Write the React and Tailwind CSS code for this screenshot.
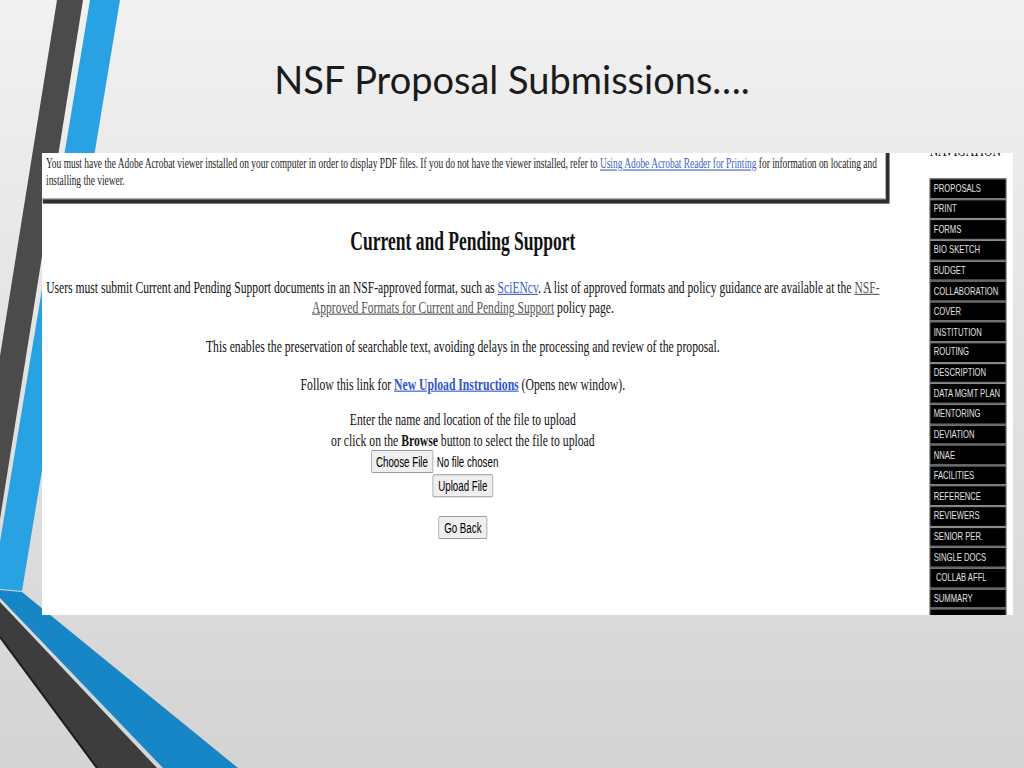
import React from "react";

const navItems = [
  "PROPOSALS",
  "PRINT",
  "FORMS",
  "BIO SKETCH",
  "BUDGET",
  "COLLABORATION",
  "COVER",
  "INSTITUTION",
  "ROUTING",
  "DESCRIPTION",
  "DATA MGMT PLAN",
  "MENTORING",
  "DEVIATION",
  "NNAE",
  "FACILITIES",
  "REFERENCE",
  "REVIEWERS",
  "SENIOR PER.",
  "SINGLE DOCS",
  "COLLAB AFFL",
  "SUMMARY",
  "SUPPORT",
];

const btn =
  "h-[21px] rounded-[2px] border border-[#9b9b9b] bg-[#efefef] px-[6px] text-[13.33px] leading-[19px] text-black font-['Liberation_Sans',Arial,sans-serif]";

// slide decoration (the two bent stripes on the left)
function Stripes() {
  return (
    <svg
      className="absolute inset-0 h-full w-full"
      viewBox="0 0 1024 768"
      preserveAspectRatio="none"
    >
      <polygon points="57,0 83,0 0,519 0,356" fill="#4b4b4b" />
      <polygon points="90,0 120,0 22,591 0,589 0,542" fill="#28a2e2" />
      <polygon points="0,590 22,592 238,768 163,768 0,598" fill="#1786c6" />
      <polygon points="0,602 157,768 97,768 0,637" fill="#3d3d3d" />
      <line x1="0" y1="637" x2="97" y2="768" stroke="#1c1c1c" strokeWidth="2" />
    </svg>
  );
}

export default function App() {
  return (
    <div className="relative h-[768px] w-[1024px] overflow-hidden bg-linear-to-b from-[#f1f1f1] to-[#d4d4d4]">
      <Stripes />
      <div className="relative">
        <h1 className="pt-[60px] text-center text-[38px] leading-none text-[#1b1b1b] font-['Lato',sans-serif]">
          NSF Proposal Submissions….
        </h1>

        {/* pasted browser screenshot, squashed sideways like the original */}
        <div className="ml-[42px] mt-[55px] h-[462px] w-[971px] overflow-hidden">
          <div className="flex h-[420px] w-[1330px] origin-top-left scale-x-[0.73] scale-y-[1.1] bg-white">
            <div className="w-[1153px] shrink-0 text-[#111] font-['Liberation_Serif','Times_New_Roman',serif]">
              <div className="-ml-[4px] -mt-[6px] w-[1160px] whitespace-nowrap border border-[#a8a8a8] bg-white pb-[8px] pl-[8.5px] pt-[8px] text-[12.9px] leading-[15px] text-[#222] shadow-[5px_4px_0_#2e2e2e]">
                You must have the Adobe Acrobat viewer installed on your computer in order to display PDF files. If you do not have the viewer installed, refer to{" "}
                <a className="text-[#3c5fc9] underline">Using Adobe Acrobat Reader for Printing</a>{" "}
                for information on locating and
                <br />
                installing the viewer.
              </div>

              <h2 className="mt-[24px] text-center text-[24px] font-bold leading-[28px]">
                Current and Pending Support
              </h2>

              <p className="mt-[18.5px] whitespace-nowrap text-center text-[15.9px] leading-[18px]">
                Users must submit Current and Pending Support documents in an NSF-approved format, such as{" "}
                <a className="text-[#3b5bd0] underline">SciENcv</a>. A list of approved formats and policy guidance are available at the{" "}
                <a className="text-[#555] underline">NSF-</a>
                <br />
                <a className="text-[#555] underline">Approved Formats for Current and Pending Support</a> policy page.
              </p>

              <p className="mt-[18.5px] text-center text-[16px] leading-[18px]">
                This enables the preservation of searchable text, avoiding delays in the processing and review of the proposal.
              </p>

              <p className="mt-[16px] text-center text-[16px] leading-[18px]">
                Follow this link for{" "}
                <a className="font-bold text-[#2f55c8] underline">New Upload Instructions</a> (Opens new window).
              </p>

              <p className="mt-[14px] text-center text-[16px] leading-[18.5px]">
                Enter the name and location of the file to upload
                <br />
                or click on the <b>Browse</b> button to select the file to upload
              </p>

              <div className="flex justify-center">
                <div className="flex w-[252px] items-center gap-[5px] text-[13.33px] text-black font-['Liberation_Sans',Arial,sans-serif]">
                  <button className={btn}>Choose File</button>
                  <span>No file chosen</span>
                </div>
              </div>
              <div className="mt-[0.5px] flex justify-center">
                <button className={btn + " px-[7px]"}>Upload File</button>
              </div>
              <div className="mt-[17px] flex justify-center">
                <button className={btn + " px-[7px]"}>Go Back</button>
              </div>
            </div>

            <div className="ml-[61px] w-[116px] shrink-0 pl-[2px]">
              <div className="-mt-[10px] text-[16px] leading-[16px] text-[#111] font-['Liberation_Serif',serif]">
                NAVIGATION
              </div>
              <div className="mt-[17px] w-[105px] font-['Liberation_Sans',Arial,sans-serif]">
                {navItems.map((item) => (
                  <div
                    key={item}
                    className={
                      "flex h-[18.64px] items-center whitespace-nowrap border border-[#8c8c8c] bg-black text-[10.5px] text-[#e2e2e2] " +
                      (item === "COLLAB AFFL" ? "pl-[7.5px]" : "pl-[4.5px]")
                    }
                  >
                    {item}
                  </div>
                ))}
              </div>
            </div>
          </div>
        </div>
      </div>
    </div>
  );
}
